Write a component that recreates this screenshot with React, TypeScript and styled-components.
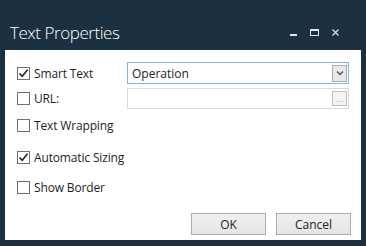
import React from "react";
import styled, { createGlobalStyle } from "styled-components";

const Global = createGlobalStyle`
  html, body { margin: 0; padding: 0; background: #1b3141; }
  body { font-family: "Open Sans", "Noto Sans", sans-serif; }
  * { box-sizing: border-box; }
`;

const Window = styled.div`
  width: 366px;
  height: 246px;
  background: #1b3141;
  display: flex;
  flex-direction: column;
`;

const TitleBar = styled.div`
  height: 50px;
  display: flex;
  align-items: center;
  padding: 0 0 0 10px;
`;

const Title = styled.div`
  flex: 1;
  color: #ffffff;
  font-size: 17px;
  font-weight: 300;
  margin-top: 14px;
  letter-spacing: -0.45px;
`;

const Controls = styled.div`
  display: flex;
  align-items: center;
  gap: 13px;
  margin-right: 27px;
  margin-top: 14px;
`;

const Panel = styled.div`
  margin: 0 5px;
  height: 190px;
  background: #ffffff;
  padding: 12px 10px 5px 12px;
  display: flex;
  flex-direction: column;
  font-size: 12px;
  color: #222;
`;

const Row = styled.div<{ $top: number; $h: number }>`
  margin-top: ${(p) => p.$top}px;
  height: ${(p) => p.$h}px;
  display: flex;
  align-items: center;
  padding-right: 2px;
`;

const CheckLabel = styled.label`
  width: 110px;
  display: flex;
  align-items: center;
  gap: 4px;
  color: #1e1e1e;
  font-size: 12px;
  letter-spacing: -0.15px;
  white-space: nowrap;
`;

const Box = styled.span`
  width: 13px;
  height: 13px;
  border: 1px solid #707070;
  background: #fff;
  display: flex;
  align-items: center;
  justify-content: center;
`;

const Combo = styled.div`
  width: 222px;
  height: 22px;
  border: 1px solid #7eb4ea;
  display: flex;
  align-items: center;
  justify-content: space-between;
  padding: 0 1px 0 4px;
  font-size: 12px;
  color: #222;
`;

const Field = styled.div`
  width: 222px;
  height: 21px;
  border: 1px solid #d9d9d9;
  display: flex;
  align-items: center;
  justify-content: flex-end;
  padding-right: 1px;
`;

const SmallBtn = styled.div<{ $disabled?: boolean }>`
  width: 15px;
  height: ${(p) => (p.$disabled ? 15 : 17)}px;
  border: 1px solid ${(p) => (p.$disabled ? "#bfbfbf" : "#acacac")};
  background: ${(p) => (p.$disabled ? "#f4f4f4" : "#e8e8e8")};
  display: flex;
  align-items: center;
  justify-content: center;
  font-size: 9px;
  color: #b0b0b0;
  line-height: 1;
`;

const ButtonRow = styled.div`
  margin-top: 15px;
  display: flex;
  justify-content: flex-end;
  gap: 10px;
`;

const Button = styled.button`
  width: 75px;
  height: 22px;
  border: 1px solid #acacac;
  background: linear-gradient(#f0f0f0, #e5e5e5);
  font-family: "Open Sans", "Noto Sans", sans-serif;
  font-size: 12px;
  color: #222;
  padding: 0;
`;

const Check = () => (
  <svg width="11" height="11" viewBox="0 0 11 11">
    <path d="M1.5 5.5 L4.2 8.3 L9.6 1.8" fill="none" stroke="#222" strokeWidth="1.6" />
  </svg>
);

const CheckItem = ({ label, checked }: { label: string; checked?: boolean }) => (
  <CheckLabel>
    <Box>{checked && <Check />}</Box>
    {label}
  </CheckLabel>
);

export default function App() {
  return (
    <Window>
      <Global />
      <TitleBar>
        <Title>Text Properties</Title>
        <Controls>
          <svg width="7" height="9" viewBox="0 0 7 9">
            <rect x="0" y="6" width="7" height="2" fill="#dfe3e6" />
          </svg>
          <svg width="9" height="7" viewBox="0 0 9 7">
            <rect x="0.5" y="0.5" width="8" height="6" fill="none" stroke="#dfe3e6" strokeWidth="1" />
            <rect x="0" y="0" width="9" height="2" fill="#dfe3e6" />
          </svg>
          <svg width="7" height="7" viewBox="0 0 7 7">
            <path d="M0.5 0.5 L6.5 6.5 M6.5 0.5 L0.5 6.5" stroke="#dfe3e6" strokeWidth="1.2" />
          </svg>
        </Controls>
      </TitleBar>
      <Panel>
        <Row $top={0} $h={22}>
          <CheckItem label="Smart Text" checked />
          <Combo>
            <span>Operation</span>
            <SmallBtn>
              <svg width="8" height="6" viewBox="0 0 8 6">
                <path d="M1 1.5 L4 4.5 L7 1.5" fill="none" stroke="#555" strokeWidth="1.5" />
              </svg>
            </SmallBtn>
          </Combo>
        </Row>
        <Row $top={4} $h={21}>
          <CheckItem label="URL:" />
          <Field>
            <SmallBtn $disabled>...</SmallBtn>
          </Field>
        </Row>
        <Row $top={5} $h={22}>
          <CheckItem label="Text Wrapping" />
        </Row>
        <Row $top={10} $h={22}>
          <CheckItem label="Automatic Sizing" checked />
        </Row>
        <Row $top={8} $h={22}>
          <CheckItem label="Show Border" />
        </Row>
        <ButtonRow>
          <Button>OK</Button>
          <Button>Cancel</Button>
        </ButtonRow>
      </Panel>
    </Window>
  );
}
